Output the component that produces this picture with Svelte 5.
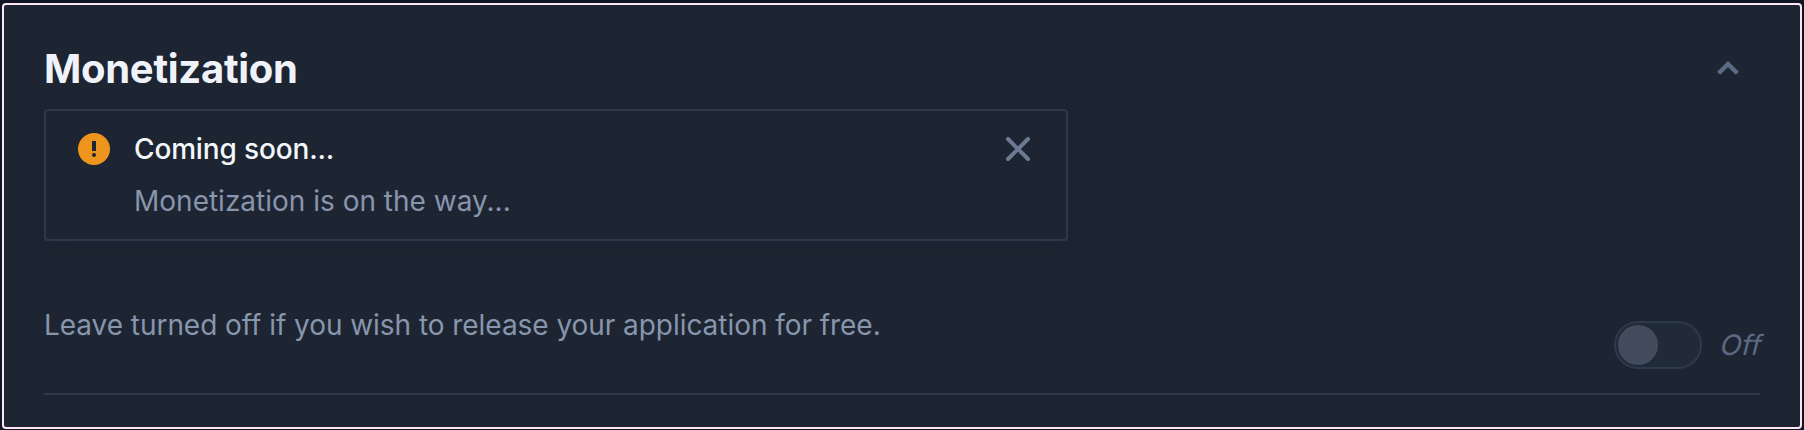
<script>
  let enabled = $state(false);
</script>

<section class="panel">
  <header class="head">
    <h2>Monetization</h2>
    <button class="collapse" aria-label="Collapse">
      <svg width="22" height="14" viewBox="0 0 22 14"><path d="M1.7 12.3 11 3l9.3 9.3" fill="none" stroke="currentColor" stroke-width="4.4" /></svg>
    </button>
  </header>

  <div class="notice">
    <svg class="alert" width="32" height="32" viewBox="0 0 32 32">
      <circle cx="16" cy="16" r="16" fill="#ee951e" />
      <path d="M14 8h4v10h-4z" fill="#1e2532" />
      <circle cx="16" cy="22" r="2" fill="#1e2532" />
    </svg>
    <div class="message">
      <p class="title">Coming soon...</p>
      <p class="detail">Monetization is on the way...</p>
    </div>
    <button class="close" aria-label="Close">
      <svg width="24" height="24" viewBox="0 0 24 24"><path d="M2 2l20 20M22 2 2 22" stroke="currentColor" stroke-width="4" stroke-linecap="round" /></svg>
    </button>
  </div>

  <div class="setting">
    <p class="hint">Leave turned off if you wish to release your application for free.</p>
    <div class="control">
      <button class="switch" role="switch" aria-checked={enabled} aria-label="Monetization" onclick={() => (enabled = !enabled)}>
        <span class="knob" class:on={enabled}></span>
      </button>
      <span class="state">{enabled ? 'On' : 'Off'}</span>
    </div>
  </div>
</section>

<style>
  :global(body) {
    background: #101623;
    overflow: hidden;
  }
  .panel {
    box-sizing: border-box;
    width: 1800px;
    height: 426px;
    margin: 3px 2px 0;
    padding: 36px 40px 0;
    border: 2px solid #fce6f2;
    border-radius: 4px;
    background: #1e2532;
    font-family: Inter, sans-serif;
    font-size: 28px;
    color: #8795ad;
  }
  h2, p { margin: 0; }
  button {
    display: block;
    padding: 0;
    border: 0;
    background: none;
  }
  svg { display: block; }
  .head {
    display: flex;
    justify-content: space-between;
    align-items: flex-start;
    height: 68px;
  }
  h2 {
    font-size: 40px;
    line-height: 56px;
    font-weight: 700;
    letter-spacing: -0.28px;
    color: #eff3f9;
  }
  .collapse {
    margin: 20px 21px 0 0;
    color: #5c6a83;
  }
  .notice {
    box-sizing: border-box;
    display: flex;
    align-items: flex-start;
    width: 1024px;
    height: 132px;
    padding: 22px 36px 0 32px;
    border: 2px solid #2e394a;
    border-radius: 4px;
    box-shadow: 0 8px 24px rgba(24, 28, 44, 0.12);
  }
  .message {
    flex: 1;
    margin: -4px 0 0 24px;
  }
  .title, .detail { line-height: 40px; }
  .title {
    color: #f3f6fb;
    font-weight: 500;
    letter-spacing: -0.15px;
  }
  .detail { margin-top: 12px; }
  .close {
    margin-top: 4px;
    color: #6c7a92;
  }
  .setting {
    box-sizing: border-box;
    display: flex;
    justify-content: space-between;
    width: 1716px;
    height: 154px;
    padding-top: 64px;
    border-bottom: 2px solid #2e394a;
  }
  .hint {
    line-height: 40px;
    letter-spacing: -0.05px;
  }
  .control {
    display: flex;
    align-items: center;
    gap: 19px;
    height: 48px;
    margin: 16px -4px 0 0;
  }
  .switch {
    box-sizing: border-box;
    width: 88px;
    height: 48px;
    padding: 2px;
    border: 2px solid #2e394a;
    border-radius: 24px;
    background: #202a38;
  }
  .knob {
    display: block;
    width: 40px;
    height: 40px;
    border-radius: 50%;
    background: #434c5d;
  }
  .knob.on { margin-left: auto; }
  .state {
    width: 43px;
    color: #5c6a83;
    transform: skewX(-14deg);
  }
</style>
